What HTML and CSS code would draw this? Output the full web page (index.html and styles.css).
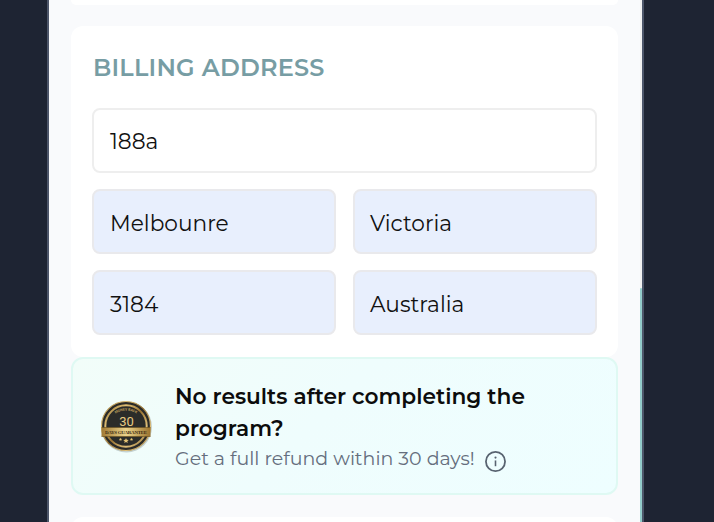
FILE: index.html
```html
<!DOCTYPE html>
<html lang="en">
<head>
<meta charset="utf-8">
<title>Billing address</title>
<link rel="stylesheet" href="styles.css">
</head>
<body>
<main class="panel">
  <div class="content">
    <section class="card card-prev"></section>
    <section class="card billing">
      <h2 class="title"><span>BILLING ADDRESS</span></h2>
      <div class="fields">
        <div class="field wide"><span>188a</span></div>
        <div class="field filled"><span>Melbounre</span></div>
        <div class="field filled right"><span>Victoria</span></div>
        <div class="field filled"><span>3184</span></div>
        <div class="field filled right"><span>Australia</span></div>
      </div>
    </section>
    <section class="guarantee">
      <svg class="badge" viewBox="0 0 56 56" aria-hidden="true">
        <defs>
          <linearGradient id="gold" x1="0" y1="0" x2="1" y2="1">
            <stop offset="0" stop-color="#8c6a2c"/><stop offset=".25" stop-color="#e0c075"/>
            <stop offset=".5" stop-color="#9a7432"/><stop offset=".75" stop-color="#dfc07a"/>
            <stop offset="1" stop-color="#8a682b"/>
          </linearGradient>
          <linearGradient id="band" x1="0" y1="0" x2="1" y2="0">
            <stop offset="0" stop-color="#a17a34"/><stop offset=".5" stop-color="#ecd48c"/>
            <stop offset="1" stop-color="#9c742e"/>
          </linearGradient>
          <path id="arc" d="M15.500 17Q28 8 40.500 17"/>
        </defs>
        <circle cx="28.500" cy="29" r="25.500" fill="#617070" opacity=".3"/>
        <circle cx="28" cy="28" r="24.500" fill="#2b2b28" stroke="url(#gold)" stroke-width="1.200"/>
        <circle cx="28" cy="28" r="20.700" fill="#2b2c29" stroke="url(#gold)" stroke-width="2"/>
        <text class="seal-arc"><textPath href="#arc" startOffset="50%" text-anchor="middle">MONEY BACK</textPath></text>
        <text class="seal-number" x="28.500" y="27.500" text-anchor="middle">30</text>
        <path d="M3.500 29.500h49v9h-49z" fill="url(#band)"/>
        <path d="M3.500 29.500h49M3.500 38.500h49" stroke="#69501f" stroke-width=".6"/>
        <text class="seal-band" x="28" y="36" text-anchor="middle" textLength="42">DAYS GUARANTEE</text>
        <path fill="#e5c575" d="M28 40l.8 1.700 1.900.2-1.400 1.300.4 1.900-1.700-1-1.700 1 .4-1.900-1.400-1.300 1.900-.2zM22.500 39.800l.5 1 1.100.1-.8.800.2 1.100-1-.5-1 .5.200-1.100-.8-.8 1.100-.1zM33.500 39.800l.5 1 1.100.1-.8.800.2 1.100-1-.5-1 .5.200-1.100-.8-.8 1.100-.1z"/>
      </svg>
      <div class="copy">
        <p class="question">No results after completing the<br>program?</p>
        <p class="refund"><span>Get a full refund within 30 days!</span>
          <svg class="info" viewBox="0 0 20 20" aria-hidden="true"><circle cx="10" cy="10" r="9.100" fill="none" stroke="#586370" stroke-width="1.700"/><path d="M10 9v5.500" stroke="#586370" stroke-width="1.500"/><circle cx="10" cy="6.300" r="1" fill="#586370"/></svg>
        </p>
      </div>
    </section>
    <section class="card card-next"></section>
  </div>
  <div class="track"><div class="thumb"></div></div>
</main>
</body>
</html>
```
FILE: styles.css
```css
* { box-sizing: border-box; }
body {
  margin: 0;
  height: 522px;
  overflow: hidden;
  background: #1e2433;
  font-family: Montserrat, Inter, sans-serif;
  color: #111;
}
p, h2 { margin: 0; }
.panel {
  display: flex;
  width: 597px;
  height: 522px;
  margin-left: 47px;
  border: solid #4d566a;
  border-width: 0 2px;
  background: #f9fafc;
  overflow: hidden;
}
.content { width: 547px; margin-left: 22px; }
.card { background: #fff; border-radius: 12px; }
.card-prev { height: 5px; border-radius: 0 0 12px 12px; }
.card-next { height: 40px; margin-top: 22px; }
.billing { height: 331px; margin-top: 21px; padding: 26px 21px 22px; }
.title {
  height: 32px;
  font-size: 24px;
  line-height: 32px;
  font-weight: 600;
  color: #779da4;
  white-space: nowrap;
}
.title span { margin-left: 1px; letter-spacing: .22px; }
.fields {
  display: grid;
  grid-template-columns: 244px 244px;
  grid-auto-rows: 65px;
  gap: 16px 17px;
  margin-top: 24px;
}
.field {
  display: flex;
  align-items: center;
  padding: 0 0 0 16px;
  border: 2px solid #eeeeee;
  border-radius: 8px;
  font-size: 21.700px;
  white-space: nowrap;
}
.wide { grid-column: 1 / -1; }
.filled { background: #e8effd; border-color: #e9e9ec; padding-top: 2px; }
.right { padding-left: 15px; }
.guarantee {
  display: flex;
  height: 138px;
  padding: 21px 20px 0 25px;
  border: 2px solid #dff9f3;
  border-radius: 12px;
  background: linear-gradient(135deg, #f2fdf9, #effdfd 45%, #eefeff);
}
.badge { width: 56px; height: 56px; margin-top: 18px; flex: none; }
.seal-number { font: 400 13px Roboto, sans-serif; fill: #e7ca83; }
.seal-arc { font: 700 3.500px Roboto, sans-serif; fill: #c0a15d; }
.seal-band { font: 700 5px "Liberation Serif", serif; fill: #3b2d14; }
.copy { margin-left: 21px; white-space: nowrap; }
.question { font-size: 21.700px; line-height: 32px; font-weight: 600; color: #0c0c0c; }
.refund {
  display: flex;
  align-items: center;
  height: 28px;
  font-size: 19px;
  color: #656e7d;
}
.info { width: 21px; height: 21px; margin: 6px 0 0 10px; }
.track { width: 2px; height: 522px; margin-left: auto; background: #f1f1f1; padding-top: 288px; }
.thumb { height: 234px; background: #93cccb; border-radius: 2px 2px 0 0; }
```
